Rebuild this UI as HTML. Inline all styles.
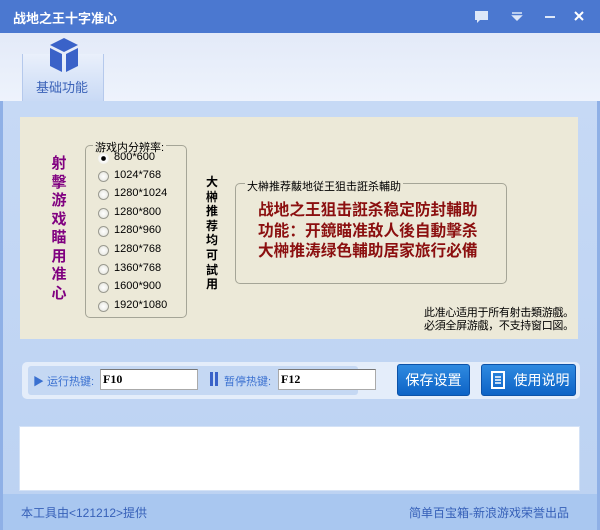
<!DOCTYPE html>
<html><head><meta charset="utf-8"><style>
*{margin:0;padding:0;box-sizing:border-box}
body{width:600px;height:530px;overflow:hidden;font-family:"Liberation Sans","Noto Sans CJK SC",sans-serif;font-size:12px;position:relative;background:#c4d8f4}
.a{position:absolute;white-space:nowrap}
.title{left:0;top:0;width:600px;height:33px;background:#4b78d0}
.tb{left:0;top:33px;width:600px;height:68px;background:linear-gradient(#e3eaf8,#eef3fc)}
.frame{left:0;top:101px;width:600px;height:429px;background:linear-gradient(#c6d9f5,#bcd2f2);border-left:3px solid #8fb0e6;border-right:3px solid #8fb0e6}
.beige{left:20px;top:117px;width:558px;height:222px;background:#ece9d8}
.gb{border:1px solid #a5a597;border-radius:5px}
.gl{background:#ece9d8;padding:0 2px;font-size:12px;color:#000}
.radio{width:11px;height:11px;border-radius:50%;border:1px solid #9a9a90;background:radial-gradient(#fff,#e2e2da)}
.rt{font-size:11px;color:#000;left:114px}
.btn{top:364px;height:32px;background:linear-gradient(#2f8ae0,#0d63c6);border:1px solid #0c52a8;border-radius:3px;color:#fff;font-size:14px;text-align:center;line-height:30px}
</style></head><body>
<div class="a title"></div>
<div class="a" style="left:13px;top:8px;color:#fff;font-weight:bold;font-size:13px">战地之王十字准心</div>
<svg class="a" style="left:472px;top:9px" width="120" height="16">
<rect x="3" y="2" width="13" height="9" fill="#dde7f8"/><path d="M5 11 L5 14 L8 11Z" fill="#dde7f8"/>
<path d="M40 4h10M41 7h8l-4 4z" stroke="#dde7f8" stroke-width="1.5" fill="#dde7f8"/>
<rect x="73" y="7" width="10" height="2" fill="#dde7f8"/>
<path d="M103 3l8 8M111 3l-8 8" stroke="#fff" stroke-width="2"/>
</svg>
<div class="a tb"></div>
<div class="a" style="left:22px;top:54px;width:82px;height:47px;background:linear-gradient(#eaf0fb,#c9daf5);border-left:1px solid #b5c9ec;border-right:1px solid #b5c9ec"></div>
<svg class="a" style="left:48px;top:37px" width="32" height="37"><path d="M16 1L30 8L16 15L2 8Z" fill="#3a62c8"/><path d="M2 11L14 17V35L2 29Z" fill="#3a62c8"/><path d="M30 11L18 17V35L30 29Z" fill="#3a62c8"/></svg>
<div class="a" style="left:36px;top:77px;color:#3a62b8;font-size:13px">基础功能</div>
<div class="a frame"></div>
<div class="a beige"></div>
<div class="a" style="left:50px;top:155px;width:18px;color:#800080;font-weight:bold;font-size:15px;line-height:18.5px;text-align:center;white-space:normal">射擊游戏瞄用准心</div>
<div class="a gb" style="left:85px;top:145px;width:102px;height:173px"></div>
<div class="a gl" style="left:93px;top:139px;font-size:11px">游戏内分辨率:</div>
<div class="a" style="left:98px;top:153px;width:11px;height:11px;border-radius:50%;background:radial-gradient(#000 25%,#fff 35%,#e2e2da)"></div>
<div class="a rt" style="top:151px">800*600</div>
<div class="a radio" style="left:98px;top:171px"></div><div class="a rt" style="top:169px">1024*768</div>
<div class="a radio" style="left:98px;top:189px"></div><div class="a rt" style="top:187px">1280*1024</div>
<div class="a radio" style="left:98px;top:208px"></div><div class="a rt" style="top:206px">1280*800</div>
<div class="a radio" style="left:98px;top:226px"></div><div class="a rt" style="top:224px">1280*960</div>
<div class="a radio" style="left:98px;top:245px"></div><div class="a rt" style="top:243px">1280*768</div>
<div class="a radio" style="left:98px;top:264px"></div><div class="a rt" style="top:262px">1360*768</div>
<div class="a radio" style="left:98px;top:282px"></div><div class="a rt" style="top:280px">1600*900</div>
<div class="a radio" style="left:98px;top:301px"></div><div class="a rt" style="top:299px">1920*1080</div>
<div class="a" style="left:205px;top:175px;width:14px;font-weight:bold;font-size:12px;line-height:14.6px;text-align:center;white-space:normal">大榊推荐均可試用</div>
<div class="a gb" style="left:235px;top:183px;width:272px;height:101px"></div>
<div class="a gl" style="left:245px;top:178px;font-size:11px">大榊推荐黻地従王狙击誑杀輔助</div>
<div class="a" style="left:258px;top:201px;color:#8b0f0f;font-weight:bold;font-size:15.7px;line-height:20.5px">战地之王狙击誑杀稳定防封輔助<br>功能：开鏡瞄准敌人後自動擊杀<br>大榊推涛绿色輔助居家旅行必備</div>
<div class="a" style="left:424px;top:307px;font-size:11px;line-height:13px;letter-spacing:-0.3px">此准心适用于所有射击類游戲。<br>必須全屏游戲，不支持窗口図。</div>
<div class="a" style="left:22px;top:362px;width:558px;height:37px;border-radius:5px;background:#e4edfa"></div>
<div class="a" style="left:28px;top:366px;width:330px;height:29px;border-radius:3px;background:#c5d8f3"></div>
<div class="a" style="left:33px;top:373px;color:#3a70d0;font-size:11px">▶ 运行热键:</div>
<div class="a" style="left:100px;top:369px;width:98px;height:21px;background:#fff;border:1px solid #aaa;border-top-color:#777;font-family:'Liberation Serif',serif;font-weight:bold;font-size:12px;padding:2px">F10</div>
<div class="a" style="left:210px;top:372px;width:3px;height:14px;background:#3a62c8"></div>
<div class="a" style="left:215px;top:372px;width:3px;height:14px;background:#3a62c8"></div>
<div class="a" style="left:224px;top:373px;color:#3a70d0;font-size:11px">暂停热键:</div>
<div class="a" style="left:278px;top:369px;width:98px;height:21px;background:#fff;border:1px solid #aaa;border-top-color:#777;font-family:'Liberation Serif',serif;font-weight:bold;font-size:12px;padding:2px">F12</div>
<div class="a btn" style="left:397px;width:73px">保存设置</div>
<div class="a btn" style="left:481px;width:95px;padding-left:26px">使用说明</div>
<svg class="a" style="left:490px;top:371px" width="16" height="18"><rect x="2" y="1" width="12" height="16" fill="none" stroke="#fff" stroke-width="2"/><path d="M5 6h6M5 9h6M5 12h6" stroke="#fff" stroke-width="1.5"/></svg>
<div class="a" style="left:19px;top:426px;width:561px;height:65px;background:#fff;border:1px solid #d4e2f6"></div>
<div class="a" style="left:3px;top:494px;width:594px;height:36px;background:#a9c7f0"></div>
<div class="a" style="left:21px;top:504px;color:#3660b8;font-size:12px">本工具由&lt;121212&gt;提供</div>
<div class="a" style="left:409px;top:504px;color:#3660b8;font-size:12px">简单百宝箱-新浪游戏荣誉出品</div>
</body></html>
